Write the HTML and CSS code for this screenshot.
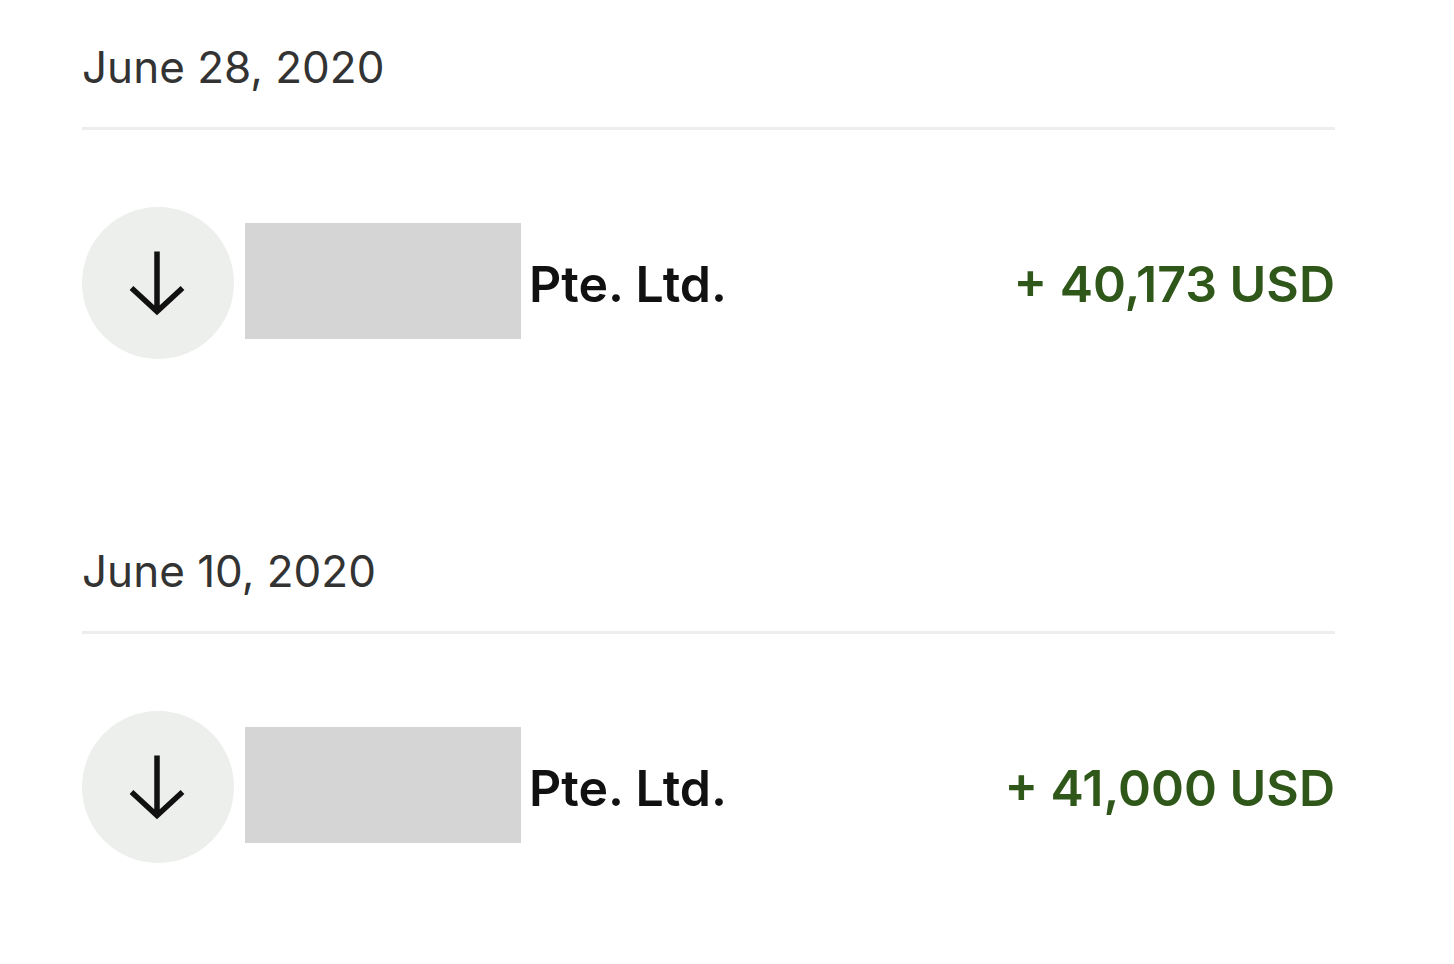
FILE: index.html
```
<!DOCTYPE html>
<html lang="en">
<head>
    <meta charset="UTF-8">
    <meta name="viewport" content="width=device-width, initial-scale=1.0">
    <title>Transactions</title>
    <link rel="stylesheet" href="styles.css">
</head>
<body>
    <main class="transactions">
        <section class="day">
            <h2 class="date">June 28, 2020</h2>
            <div class="transaction">
                <div class="icon">
                    <svg viewBox="0 0 152 152" fill="none" stroke="#111" stroke-width="5.5">
                        <path d="M75 44.5V104.5M49.5 81L75 104.5L100.500 81"/>
                    </svg>
                </div>
                <div class="redacted"></div>
                <div class="name">Pte. Ltd.</div>
                <div class="amount">+ 40,173 USD</div>
            </div>
        </section>

        <section class="day">
            <h2 class="date">June 10, 2020</h2>
            <div class="transaction">
                <div class="icon">
                    <svg viewBox="0 0 152 152" fill="none" stroke="#111" stroke-width="5.5">
                        <path d="M75 44.5V104.5M49.5 81L75 104.5L100.5 81"/>
                    </svg>
                </div>
                <div class="redacted"></div>
                <div class="name">Pte. Ltd.</div>
                <div class="amount">+ 41,000 USD</div>
            </div>
        </section>
    </main>
</body>
</html>
```
FILE: styles.css
```
body {
    margin: 0;
    background-color: #fff;
    font-family: Inter, sans-serif;
}
.transactions {
    display: flex;
    flex-direction: column;
    gap: 180px;
    padding: 35px 119px 80px 82px;
}
.date {
    margin: 0;
    padding-bottom: 28px;
    border-bottom: 3px solid #eee;
    color: #333;
    font-size: 44px;
    font-weight: 400;
    line-height: 64px;
}
.transaction {
    display: flex;
    align-items: center;
    margin-top: 77px;
}
.icon {
    width: 152px;
    height: 152px;
    border-radius: 50%;
    background-color: #edefec;
}
.icon svg {
    display: block;
}
/* hides the first part of the company name */
.redacted {
    width: 276px;
    height: 116px;
    margin-left: 11px;
    margin-bottom: 4px;
    background-color: #d5d5d5;
}
.name,
.amount {
    padding-top: 2px;
    font-size: 50px;
    font-weight: 600;
    line-height: 64px;
    white-space: nowrap;
}
.name {
    margin-left: 8px;
    color: #111;
}
.amount {
    margin-left: auto;
    color: #30571a;
}
```
